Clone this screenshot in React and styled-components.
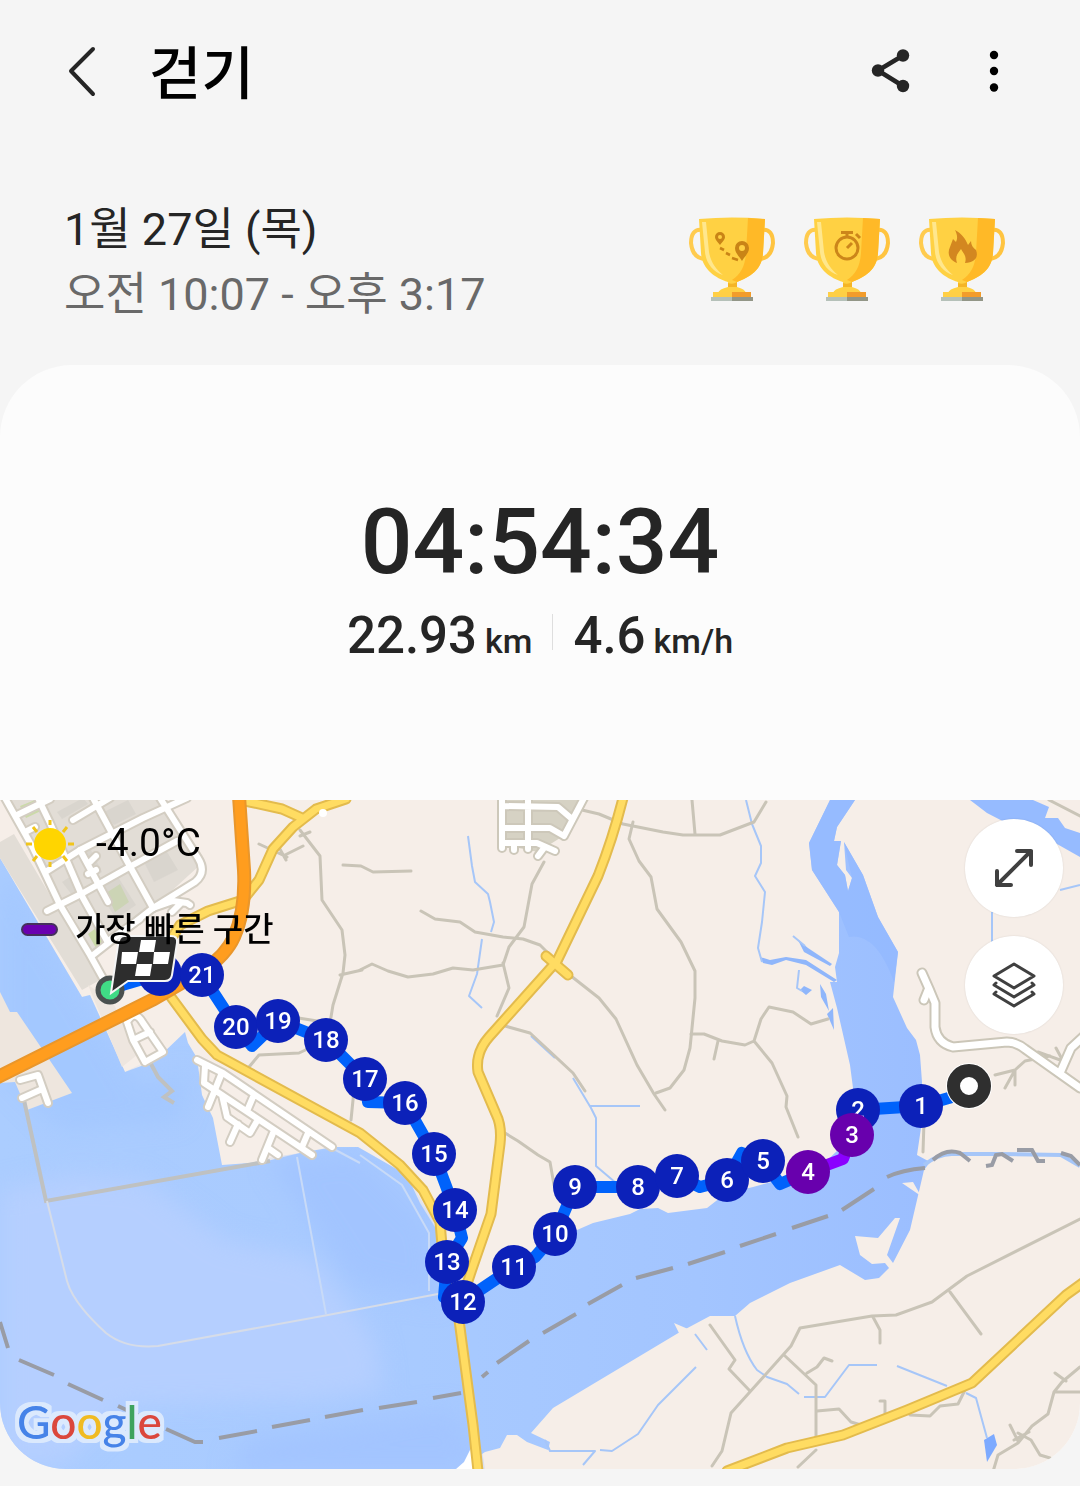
import React from 'react';
import styled, { createGlobalStyle } from 'styled-components';

const GlobalStyle = createGlobalStyle`
  * {
    box-sizing: border-box;
  }
  body {
    margin: 0;
    background: #f5f5f5;
    color: #252525;
    font-family: Roboto, 'Noto Sans CJK KR', sans-serif;
  }
`;

const Page = styled.main`
  padding-bottom: 17px;
`;

const TopBar = styled.header`
  display: flex;
  align-items: center;
  height: 144px;
  padding: 0 62px 0 58px;
`;

const IconButton = styled.button`
  display: flex;
  align-items: center;
  justify-content: center;
  width: 48px;
  height: 64px;
  padding: 0;
  border: 0;
  background: none;
  color: #252525;
  cursor: pointer;
`;

const Title = styled.h1`
  flex: 1;
  margin: 0 0 0 43px;
  padding-top: 6px;
  color: #000;
  font-size: 57px;
  font-weight: 500;
  line-height: 80px;
`;

const Actions = styled.div`
  display: flex;
  gap: 56px;
`;

const Summary = styled.section`
  display: flex;
  align-items: center;
  justify-content: space-between;
  height: 221px;
  padding: 10px 75px 0 64px;
`;

const DateBlock = styled.div`
  padding-top: 4px;
`;

const DateText = styled.p`
  margin: 0;
  color: ${({ $muted }) => ($muted ? '#696969' : '#252525')};
  font-size: 45px;
  line-height: 65px;
`;

const Trophies = styled.ul`
  display: flex;
  gap: 29px;
  margin: 0;
  padding: 0;
  list-style: none;
`;

const TrophyItem = styled.li`
  display: flex;
`;

const Card = styled.section`
  overflow: hidden;
  border-radius: 72px 72px 66px 66px;
  background: #fcfcfc;
`;

const Stats = styled.div`
  display: flex;
  flex-direction: column;
  align-items: center;
  height: 435px;
  padding-top: 123px;
`;

const Duration = styled.p`
  margin: 0;
  font-size: 91px;
  font-weight: 500;
  line-height: 108px;
`;

const StatRow = styled.div`
  display: flex;
  align-items: flex-start;
  margin-top: 8px;
`;

const Stat = styled.p`
  margin: 0;
  font-size: 51px;
  font-weight: 500;
  line-height: 64px;
`;

const Unit = styled.span`
  margin-left: 8px;
  font-size: 34px;
`;

const Divider = styled.span`
  width: 1px;
  height: 36px;
  margin: 10px 20px 0;
  background: #dedede;
`;

const MapBox = styled.div`
  position: relative;
`;

const MapSvg = styled.svg`
  display: block;
  width: 100%;
  height: auto;
`;

const MarkerText = styled.text`
  fill: #fff;
  font-size: 24px;
  font-weight: 500;
  text-anchor: middle;
`;

const Logo = styled.text`
  font-family: Lato, sans-serif;
  font-size: 46px;
  font-weight: 500;
`;

const MapInfo = styled.div`
  position: absolute;
  top: 18px;
  left: 21px;
  display: flex;
  flex-direction: column;
  gap: 38px;
  color: #000;
`;

const InfoRow = styled.div`
  display: flex;
  align-items: center;
  gap: ${({ $gap }) => $gap}px;
  height: 49px;
  font-size: ${({ $size }) => $size}px;
  font-weight: ${({ $weight }) => $weight};
  line-height: 48px;
`;

const FastestMark = styled.span`
  width: 37px;
  height: 13px;
  border: 2px solid #45305c;
  border-radius: 7px;
  background: #6a00b0;
`;

const MapControls = styled.div`
  position: absolute;
  top: 19px;
  right: 17px;
  display: flex;
  flex-direction: column;
  gap: 19px;
`;

const RoundButton = styled.button`
  display: flex;
  align-items: center;
  justify-content: center;
  width: 98px;
  height: 98px;
  padding: 0;
  border: 0;
  border-radius: 50%;
  background: #fff;
  box-shadow: 0 0 2px rgba(0, 0, 0, 0.12);
  cursor: pointer;
`;

const badges = [
  {
    label: '거리',
    art: (
      <g fill="#c98416">
        <path fillRule="evenodd" d="M31 15a5 5 0 0 1 5 5c0 3-3 5-5 8-2-3-5-5-5-8a5 5 0 0 1 5-5zm0 3a2 2 0 1 0 0 4 2 2 0 0 0 0-4z" />
        <path fillRule="evenodd" d="M53 24a7 7 0 0 1 7 7c0 5-4 8-7 13-3-5-7-8-7-13a7 7 0 0 1 7-7zm0 4a3 3 0 1 0 0 6 3 3 0 0 0 0-6z" />
        <path d="M31 31l4 2M37 36l4 2M43 41l6 2" stroke="#c98416" strokeWidth="2.6" />
      </g>
    ),
  },
  {
    label: '시간',
    art: (
      <g fill="none" stroke="#cc861a" strokeWidth="3">
        <circle cx="43" cy="31" r="11" />
        <path d="M37 15.500h12M43 16v4M52 17l4 4M43 31l5-5" />
      </g>
    ),
  },
  {
    label: '칼로리',
    art: (
      <path
        fill="#d38720"
        d="M36 13c7 4 10 8 13 15l3-4c0 4 2 7 5 9 3 8-2 13-11 13 2-6-1-9-4-14-4 5-6 8-4 14-8-3-10-10-7-16l3-8 3 3c2-4 1-8-1-12z"
      />
    ),
  },
];

const Trophy = ({ label, children }) => (
  <svg width="86" height="86" viewBox="0 0 86 86" role="img" aria-label={label}>
    <path d="M14 13C5 11 2 18 2 26c1 10 6 16 15 16" fill="none" stroke="#ffcb4e" strokeWidth="4" />
    <path d="M72 13c9-2 12 5 12 13-1 10-6 16-15 16" fill="none" stroke="#ffc440" strokeWidth="4" />
    <path d="M10 2q33-3 66 0l-2 34c-1 17-13 24-26 29v5q8 2 9 6H29q1-4 10-6v-5C26 61 13 52 12 36z" fill="#ffd143" />
    <path d="M59 1l17 1-2 34c-1 17-13 24-26 29l-5-2c9-6 13-14 14-27z" fill="#ffb927" />
    <path d="M13 5h4l3 30c2 11 7 17 14 23-10-3-17-12-18-23z" fill="#ffe78d" />
    <path d="M39 66q5 2 9-1v5H39z" fill="#f5b526" />
    <path d="M24 75h19v5H24z" fill="#ffcf45" />
    <path d="M43 75h19v5H43z" fill="#f29c2b" />
    <path d="M22 80h21v4H22z" fill="#b5c1b9" />
    <path d="M43 80h21v4H43z" fill="#929687" />
    {children}
  </svg>
);

const laneRoads = [
  'M343 865l18 1 12 6 38-1',
  'M421 911l14 8 25 3 15 10 28 5 20 2 17 6 17 17M571 976l28 22 17 21 21 46 17 29 11 16',
  'M360 970l12-6 16 7 20 6 25-3 20-6 20 2 30-5 6-18 15-20 8-43 12-22',
  'M503 963l6 25-12 28M505 1026l25 7 43 40 12 18',
  'M582 810l17 4 24 10 40 8 20 3h37l34-13 12-20M692 800l3 34',
  'M633 822l-4 17 10 22 12 16 6 32 24 33 14 29v27l-5 50-6 22-14 18-14 5',
  'M691 1034h13l18 7 23 4 9-4 7-22 8-12 24 5 18 12 17-5M754 1041l18 22 15 33-1 11 12 30M718 1041l-4 18',
  'M300 830l20 26 2 44 20 30 3 25-2 18-10 32-3 18-38-6M340 975l22-5',
  'M330 1023l-1 16-30 14-40 2-10 12M354 1090l-3 30',
  'M500 1130l18 11 20 14 12 7 4 23M259 844l28 13M276 842l10 18M285 855l18-9M300 836l10-4',
  'M1049 800l31 16M995 1075l20-5 10-9 25-5M1015 1070l-10 18M1015 1070v15M1038 1052l25 9M1056 1048l7 13M924 1122l-1 30',
  'M1080 1219l-113 57-35 26-36 13-24 1-72 12-9 18-60 67-9 38-10 15M950 1292l31 42M873 1317l7 13v13M784 1355l32 30v54M807 1373l10-6 7-9 8 3',
  'M817 1411l22-2 12 13 17 5M880 1401h5v12M910 1415l20 1 10-10 18-2 8-16M816 1450l-18 17',
  'M710 1325l25 35-6 9 21 22M1080 1367l-18 15-8 10-6 22-16 12-14 17-20 12-6 20M1055 1373l11 8M1054 1392h26M1018 1433l13 7 9 15 10 3M1010 1425l8 16M1014 1440l15-8',
];

const cityStreets = [
  'M5 798l28 50 27 57 30 50 15 27',
  'M38 798l12 25 17 38 16 37 24 43',
  'M93 798l34 63 26 47',
  'M160 798l38 60q9 14-3 24l-42 26-60 47',
  'M17 815l33-16M25 832l10-5M73 820l37-22M47 871l33-21 63-32 44-20M47 911l36-18 50-28 44-24',
  'M80 850l28 52M90 862l6-6M88 874l8-4M108 941l32-22',
  'M153 908l20-7 14 2 3 2M172 912l8-8',
  'M127 1022l6 18 12 22 18-10-20-29q-8-14-16-1M133 1040l17-8',
  'M20 1080l18-5 10 28M22 1098l18-8',
  'M197 1060l26 13 109 74M205 1066l-1 17 18 12 90 60M221 1075l-13 32M253 1097l-6 14M222 1095l5 22 23 16 7-12M238 1124l-8 18M273 1133l-11 27M268 1148l10 7M308 1133l-6 14',
];

const blockStreets = [
  'M502 798v50M528 798v51M502 828h48l14 8M502 843h35l18 8M514 843v7M502 806l56 1 14 12M564 836l20-38M544 848l-6 8',
];

const whiteRoads = [
  'M922 973l8 18 5 12v24q2 16 18 20l54-5q9 0 18 7l55 39',
  'M924 1000l4-10M1060 1073l11-25 13-12',
];

const yellowRoads = [
  'M245 801l37 8 20 9M346 799l-30 10-23 18-20 22-14 31-16 20-35 11-28 14-14 22',
  'M168 993l34 46 15 16 143 78 40 32 23 25 17 32 3 35 14 48 8 60 8 60 5 46',
  'M623 798q-10 40-25 78l-41 85-68 76q-14 16-11 35l18 42q6 12 4 30l-9 70-19 55-12 36',
  'M546 956l22 19',
  'M1084 1282l-18 13-94 88-65 27-64 25-30 7-26 6-60 23',
];

const routePaths = [
  'M966 1093L921 1106L858 1110L852 1135',
  'M808 1172L780 1184L763 1161L742 1153L727 1180L700 1187L677 1176L638 1187H575L555 1234L535 1257L514 1267L462 1302L444 1297L447 1262L462 1238L455 1210L434 1154L405 1103L368 1102L365 1079L326 1040L278 1021L252 1046L236 1027L202 975L160 974L112 988',
];

const markers = [
  { x: 160, y: 974 },
  { km: 1, x: 921, y: 1106 },
  { km: 2, x: 858, y: 1110 },
  { km: 3, x: 852, y: 1135, fastest: true },
  { km: 4, x: 808, y: 1172, fastest: true },
  { km: 6, x: 727, y: 1180 },
  { km: 5, x: 763, y: 1161 },
  { km: 8, x: 638, y: 1187 },
  { km: 7, x: 677, y: 1176 },
  { km: 9, x: 575, y: 1187 },
  { km: 10, x: 555, y: 1234 },
  { km: 11, x: 514, y: 1267 },
  { km: 13, x: 447, y: 1262 },
  { km: 12, x: 463, y: 1302 },
  { km: 14, x: 455, y: 1210 },
  { km: 15, x: 434, y: 1154 },
  { km: 17, x: 365, y: 1079 },
  { km: 16, x: 405, y: 1103 },
  { km: 18, x: 326, y: 1040 },
  { km: 20, x: 236, y: 1027 },
  { km: 19, x: 278, y: 1021 },
  { km: 21, x: 202, y: 975 },
];

const Roads = ({ paths, color, edge, width, border = 2 }) => (
  <g fill="none" strokeLinecap="round" strokeLinejoin="round">
    {paths.map((d) => (
      <path key={`${d}-edge`} d={d} stroke={edge} strokeWidth={width + border * 2} />
    ))}
    {paths.map((d) => (
      <path key={d} d={d} stroke={color} strokeWidth={width} />
    ))}
  </g>
);

const RouteMap = () => (
  <MapSvg viewBox="0 800 1080 669" role="img" aria-label="이동 경로 지도">
    <defs>
      <linearGradient id="sea" x1="0" y1="0" x2="1" y2="0">
        <stop offset="0" stopColor="#abcdff" />
        <stop offset="0.45" stopColor="#a8caff" />
        <stop offset="0.75" stopColor="#a3c5ff" />
        <stop offset="1" stopColor="#9bbeff" />
      </linearGradient>
      <filter id="soft" x="-20%" y="-20%" width="140%" height="140%">
        <feGaussianBlur stdDeviation="12" />
      </filter>
      <filter id="halo" x="-10%" y="-20%" width="120%" height="140%" colorInterpolationFilters="sRGB">
        <feMorphology in="SourceAlpha" operator="dilate" radius="4" result="wide" />
        <feFlood floodColor="#dbe9fd" />
        <feComposite in2="wide" operator="in" />
        <feMerge>
          <feMergeNode />
          <feMergeNode in="SourceGraphic" />
        </feMerge>
      </filter>
      <clipPath id="seaClip">
        <path d="M0 858L82 997L90 995L125 1072L163 1053L185 1032L197 1058L202 1095L215 1130L222 1165L300 1153L358 1147L407 1175L435 1223L460 1310L485 1469H0z" />
      </clipPath>
    </defs>
    <rect y="800" width="1080" height="669" fill="#f6eee8" />

    {/* water */}
    <path
      fill="url(#sea)"
      d="M0 858L82 997L90 995L125 1072L152 1062L163 1053L185 1032L188 1043L197 1058L202 1095L213 1118L222 1165L263 1162L300 1153L333 1147L358 1147L407 1175L420 1203L438 1232L450 1305L475 1300L514 1270L577 1230L593 1223L630 1214L640 1209L658 1208L668 1213L707 1208L725 1194L753 1187L787 1178L815 1172L840 1148L853 1088L850 1065L837 1008L830 982H837L835 967L839 953V912L812 870L809 843L830 800H855L837 827L834 841H841L837 865L845 875L848 891L852 878L846 870L844 842L863 875L878 917L898 952L893 997L907 1028L916 1040L920 1055L922 1082L921 1128L917 1155L930 1162L924 1170L917 1200L910 1230L893 1263L887 1255L900 1218H895L878 1238L855 1236L860 1255L872 1264L885 1263L889 1268L879 1278L865 1280L840 1265L790 1283L750 1303L735 1316H710L680 1332L553 1408L531 1433L550 1442L548 1450L527 1442L517 1435H507L500 1448L485 1452L460 1469H0z"
    />
    <g clipPath="url(#seaClip)">
      <g filter="url(#soft)">
        <path fill="#b5cfff" d="M0 1190l75-15 70 5 80 60 90 20 60 80 8 50-70 10-190 5-60 60H0z" />
        <path fill="#a2c4ff" d="M270 1160l90-8 70 70 10 80-90-20z" />
        <path fill="#9fc5ff" d="M0 860l80 130 60 100 50-20-10 50-120 10-60-60z" opacity="0.6" />
        <path fill="#a3c4ff" d="M250 1440l200-30 40 60H230z" />
      </g>
    </g>
    <path fill="#94b9ff" opacity="0.8" d="M830 800H855L837 827L834 841H841L837 865L845 875L848 891L852 878L844 842L863 875L878 917L898 952L894 982q-18-50-45-45l-10-25L812 870L809 843z" />
    <path fill="#f6eee8" d="M902 1183l11-1 8 14zM674 1323l14 6 15 10-8 8-14-10z" />
    <path fill="#96bbff" d="M970 800L987 813L1020 830L1057 844L1080 857V833L1065 828L1058 818H1045L1049 807L1033 800z" />
    <path fill="#7daaff" d="M984 1440l10-6 3 11-10 17z" />
    <path fill="#eee6de" d="M0 992L10 1012H17L72 1093L27 1110L15 1082L0 1083z" />
    <path fill="#8fb6fb" d="M760 957l10 3 16-3 20 3 31 20-3 2-28-17-20-5-14 5-9-2zM798 940l10 8 24 16-2 2-26-14zM820 984l6 10 3 17-8-14zM827 1014l6-6 1 22zM800 990l4-4 8 4-6 5z" />
    <g fill="none" stroke="#a6c6f8" strokeWidth="2" strokeLinejoin="round">
      <path d="M746 800l6 24 9 22v17l-6 13 10 16-3 30-4 26 4 14" />
      <path d="M793 936l12 10M799 970l-2 18 5 3M468 836l4 30 3 16 13 12 2 8 4 20-3 10M482 939l-5 35-8 22 13 12M531 1036l24 22M573 1078l18 30 5 10v48l20 17M590 1106h50" />
      <path d="M735 1316q8 36 22 54l10 7 20 7 12 10M804 1397h21l24-32h28M897 1366l50 20M966 1393l10 5 11 40M992 912v30M1060 890l20-5" />
      <path d="M545 1440l5 11h45l-12 14M600 1450l12 1 26-17 20-29 38-38M695 1334l12 16" />
      <path d="M924 1165q15-12 30-11h45l62 1 19 11" strokeWidth="4" />
    </g>

    {/* breakwaters and sea border */}
    <g fill="none" stroke="#bfc1c1" strokeWidth="4">
      <path d="M24 1100l22 101 224-40M150 1062l8 15 14 14-8 6 10 6" />
      <path d="M47 1201l20 80q6 22 39 52 20 16 52 13l170-31 115-22" stroke="#d6dce8" strokeWidth="2" />
      <path d="M297 1157l29 157M360 1155l42 30 27 48v58M330 1147l30 16" stroke="#c8daf7" strokeWidth="2" />
    </g>
    <g fill="none" stroke="#999ca5" strokeWidth="4">
      <path d="M0 1322l8 26M19 1360l35 15M68 1384l35 16M118 1406l30 14M166 1429l29 13h8M219 1438l38-7M272 1427l38-7M325 1417l38-7M379 1408l38-6M433 1398l28-5M482 1377l6-5M497 1363l32-22M543 1333l33-19M588 1304l34-19M636 1278l37-10M688 1264l37-12M740 1246l36-12M792 1228l36-12M842 1210l32-21M887 1177q15-7 38-9" />
      <path d="M933 1160q13-12 27-7l10 8M986 1166l6-1 4-10 6-1 11 7M1017 1150h15l6 11h7M1061 1153l10 3 9 9" />
    </g>

    {/* city blocks */}
    <path fill="#e2ddd6" d="M0 842L14 834L100 980L82 990L0 858zM8 800H163L200 865L153 908L94 955z" />
    <path fill="#eee6df" d="M88 985l24 15 25 55-15 12z" />
    <g fill="#cbdaa8">
      <path d="M20 806l15-6h6l2 10-17 8zM106 893l14-9 9 18-14 10zM88 934l8-6 10 12-10 8z" />
    </g>
    <path fill="#cfcbc6" d="M57 812l26-14 5 6-26 15zM104 812l24-12 8 14-22 11zM142 858l22-11 14 23-24 12zM98 890l20-13 18 28-20 14zM84 852l6-4 12 24-5 3zM62 882l12-8 8 15-10 6z" opacity="0.45" />
    <path fill="#d6d2c4" d="M500 800h80l-20 38-22 14-38-8z" />

    <g fill="none" stroke="#c9c4b7" strokeWidth="3" strokeLinecap="round" strokeLinejoin="round">
      {laneRoads.map((d) => (
        <path key={d} d={d} />
      ))}
    </g>
    <Roads paths={cityStreets} color="#fff" edge="#d3cdc2" width={6} />
    <Roads paths={blockStreets} color="#fff" edge="#cdc8ba" width={6} />
    <Roads paths={whiteRoads} color="#fff" edge="#cbc6b8" width={7} />
    <path d="M464 1462l8-16 4 23h-20z" fill="#fff" />
    <Roads paths={yellowRoads} color="#ffdc62" edge="#e3bb4d" width={7} />
    <Roads paths={['M239 796l5 74q2 40-10 67-8 18-30 33l-50 29L-4 1078']} color="#ff9d1e" edge="#e9962b" width={10} />
    <circle cx="323" cy="813" r="4" fill="#fff" />

    {/* walked route */}
    {routePaths.map((d) => (
      <path key={d} d={d} fill="none" stroke="#0062fb" strokeWidth="12" strokeLinejoin="round" />
    ))}
    <path d="M852 1135l-9 24-35 13" fill="none" stroke="#8b00ff" strokeWidth="12" strokeLinejoin="round" />
    {markers.map(({ km, x, y, fastest }) => (
      <g key={`${x}-${y}`}>
        <circle cx={x} cy={y} r="22" fill={fastest ? '#6800ad' : '#0c21b9'} />
        {km && (
          <MarkerText x={x} y={y + 8}>
            {km}
          </MarkerText>
        )}
      </g>
    ))}
    <circle cx="969" cy="1086" r="23" fill="#fff" />
    <circle cx="969" cy="1086" r="15.500" fill="#fff" stroke="#2f2f2f" strokeWidth="13" />
    <circle cx="110" cy="990" r="12" fill="#40dc86" stroke="#4a504f" strokeWidth="5" />
    <path
      d="M124 936h47q7 0 6 7l-5 32q-1 6-7 6h-37l-17 12 7-48q1-9 6-9z"
      fill="#2d2d2d"
      stroke="#f5f5f5"
      strokeWidth="2"
    />
    <path fill="#fff" d="M141 940h15l-2 12h-15zM122 952h16l-2 12h-15zM154 952h16l-2 12h-15zM137 964h15l-2 12h-15z" />

    <Logo x="17" y="1439" filter="url(#halo)">
      <tspan fill="#4683e8">G</tspan>
      <tspan fill="#db473c">o</tspan>
      <tspan fill="#f0bb22">o</tspan>
      <tspan fill="#4683e8">g</tspan>
      <tspan fill="#3ea35d">l</tspan>
      <tspan fill="#db473c">e</tspan>
    </Logo>
  </MapSvg>
);

const App = () => {
  return (
    <>
      <GlobalStyle />
      <Page>
        <TopBar>
          <IconButton type="button" aria-label="뒤로">
            <svg width="48" height="56" viewBox="0 0 48 56" fill="none" stroke="currentColor" strokeWidth="4">
              <path d="M35 5L13 27l22 23" strokeLinecap="round" strokeLinejoin="round" />
            </svg>
          </IconButton>
          <Title>걷기</Title>
          <Actions>
            <IconButton type="button" aria-label="공유">
              <svg width="48" height="48" viewBox="0 0 48 48" fill="currentColor">
                <path d="M37 7.500L12 22.500l25 15.500" fill="none" stroke="currentColor" strokeWidth="4.600" />
                <circle cx="37" cy="7.500" r="6.200" />
                <circle cx="12" cy="22.500" r="6.200" />
                <circle cx="37" cy="38" r="6.200" />
              </svg>
            </IconButton>
            <IconButton type="button" aria-label="더보기">
              <svg width="48" height="48" viewBox="0 0 48 48" fill="#000">
                <circle cx="24" cy="7" r="4.200" />
                <circle cx="24" cy="23" r="4.200" />
                <circle cx="24" cy="39.500" r="4.200" />
              </svg>
            </IconButton>
          </Actions>
        </TopBar>

        <Summary>
          <DateBlock>
            <DateText>1월 27일 (목)</DateText>
            <DateText $muted>오전 10:07 - 오후 3:17</DateText>
          </DateBlock>
          <Trophies>
            {badges.map((badge) => (
              <TrophyItem key={badge.label}>
                <Trophy label={badge.label}>{badge.art}</Trophy>
              </TrophyItem>
            ))}
          </Trophies>
        </Summary>

        <Card>
          <Stats>
            <Duration>04:54:34</Duration>
            <StatRow>
              <Stat>
                22.93<Unit>km</Unit>
              </Stat>
              <Divider />
              <Stat>
                4.6<Unit>km/h</Unit>
              </Stat>
            </StatRow>
          </Stats>

          <MapBox>
            <RouteMap />
            <MapInfo>
              <InfoRow $gap={17} $size={39} $weight={400}>
                <svg width="58" height="48" viewBox="0 0 58 48">
                  <path
                    d="M29 1v5M29 43v5M5 25h6M47 25h6M12 8l4 5M42 37l4 5M12 42l4-5M42 13l4-5"
                    stroke="#f1c51b"
                    strokeWidth="3"
                  />
                  <circle cx="29" cy="25" r="16" fill="#ffd500" />
                </svg>
                -4.0°C
              </InfoRow>
              <InfoRow $gap={17} $size={33} $weight={500}>
                <FastestMark />
                가장 빠른 구간
              </InfoRow>
            </MapInfo>
            <MapControls>
              <RoundButton type="button" aria-label="지도 확대">
                <svg width="44" height="44" viewBox="0 0 44 44" fill="none" stroke="#404040" strokeWidth="4" strokeLinecap="round" strokeLinejoin="round">
                  <path d="M5 39L39 5M25 5h14v14M5 25v14h14" />
                </svg>
              </RoundButton>
              <RoundButton type="button" aria-label="지도 유형">
                <svg width="46" height="46" viewBox="0 0 46 46" fill="none" stroke="#404040" strokeWidth="3" strokeLinecap="round" strokeLinejoin="round">
                  <path d="M23 2l20 12-20 12L3 14zM5 21l-2 2 20 12 20-12-2-2M5 30l-2 2 20 12 20-12-2-2" />
                </svg>
              </RoundButton>
            </MapControls>
          </MapBox>
        </Card>
      </Page>
    </>
  );
};

export default App;
